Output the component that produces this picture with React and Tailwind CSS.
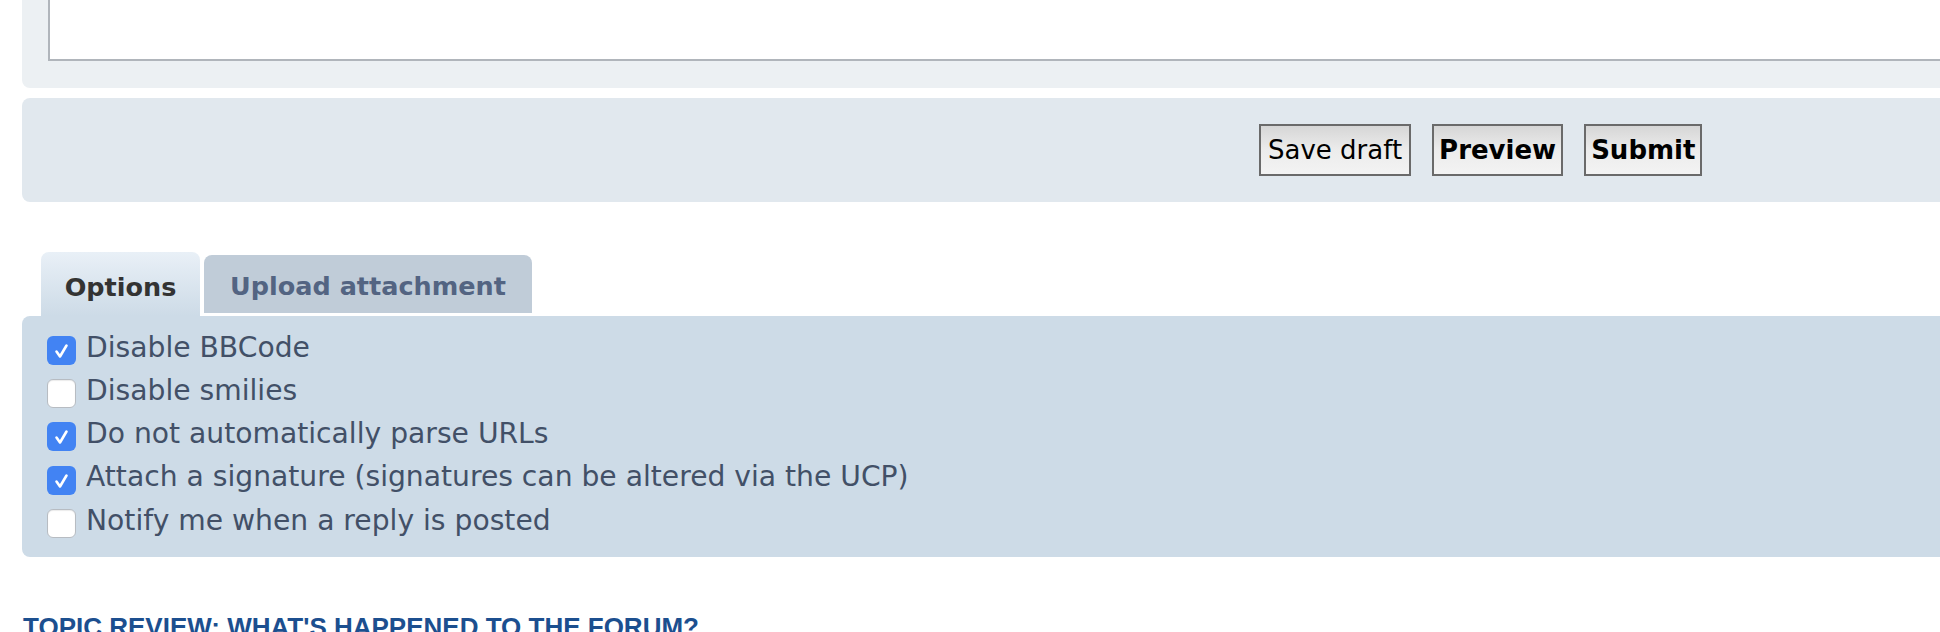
import React from "react";

const options = [
  { label: "Disable BBCode", checked: true },
  { label: "Disable smilies", checked: false },
  { label: "Do not automatically parse URLs", checked: true },
  { label: "Attach a signature (signatures can be altered via the UCP)", checked: true },
  { label: "Notify me when a reply is posted", checked: false },
];

const Checkbox = ({ checked }) =>
  checked ? (
    <span className="mt-[5px] w-[29px] h-[29px] rounded-[6px] bg-[#4283f3] flex items-center justify-center shrink-0">
      <svg width="29" height="29" viewBox="0 0 29 29" fill="none">
        <path d="M9.5 15.5 L13 20.5 L19.5 9.5" stroke="white" strokeWidth="2.6" strokeLinecap="round" strokeLinejoin="round" />
      </svg>
    </span>
  ) : (
    <span className="mt-[5px] w-[29px] h-[29px] rounded-[6px] bg-white border border-[#b7bcc2] shadow-[inset_0_1px_1px_rgba(0,0,0,0.08)] shrink-0" />
  );

const Button = ({ children, bold }) => (
  <button
    className={`h-[52px] border-2 border-[#6a6a6a] bg-gradient-to-b from-[#d6d6d6] via-[#ececec] to-[#f3f3f3] text-black text-[26px] leading-none font-['DejaVu_Sans',sans-serif] ${
      bold ? "font-bold px-[5px]" : "font-normal px-[7px]"
    }`}
  >
    {children}
  </button>
);

export default function App() {
  return (
    <div className="w-[1940px] h-[632px] overflow-hidden bg-white">
      <div className="w-[2100px] pl-[22px] -mt-[40px]">
        {/* Message panel with textarea */}
        <div className="bg-[#ecf0f3] rounded-l-[8px] pt-[10px] pb-[27px] pl-[26px]">
          <div className="h-[91px] bg-white border-l-2 border-b-2 border-[#b0b5bb]" />
        </div>

        {/* Submit buttons */}
        <div className="mt-[10px] h-[104px] bg-[#e1e8ee] rounded-l-[8px] flex items-start pt-[26px] pl-[1237px] gap-[21px]">
          <Button>Save draft</Button>
          <Button bold>Preview</Button>
          <Button bold>Submit</Button>
        </div>

        {/* Tabs */}
        <div className="mt-[50px] flex items-end pl-[19px] gap-[4px] font-['DejaVu_Sans',sans-serif] font-bold text-[25.5px]">
          <div className="h-[64px] w-[159px] rounded-t-[8px] bg-gradient-to-b from-[#e9f0f7] to-[#cddbe7] flex items-start justify-center pt-[16px] text-[#333333]">
            Options
          </div>
          <div className="h-[58px] w-[328px] mb-[3px] rounded-t-[8px] bg-[#c0ccd8] flex items-start justify-center pt-[12px] text-[#536482]">
            Upload attachment
          </div>
        </div>

        {/* Options panel */}
        <div className="bg-[#cddbe7] rounded-l-[8px] pt-[10px] pb-[15px] pl-[25px] font-['DejaVu_Sans',sans-serif] text-[28.2px] text-[#425067]">
          {options.map((o) => (
            <label key={o.label} className="h-[43.3px] flex items-center gap-[10px]">
              <Checkbox checked={o.checked} />
              <span className="leading-none">{o.label}</span>
            </label>
          ))}
        </div>

        <h3 className="mt-[57px] pl-[1px] text-[26px] leading-none font-bold uppercase text-[#1c4f8f] font-['Liberation_Sans',Arial,sans-serif]">
          Topic review: What's happened to the forum?
        </h3>
      </div>
    </div>
  );
}
